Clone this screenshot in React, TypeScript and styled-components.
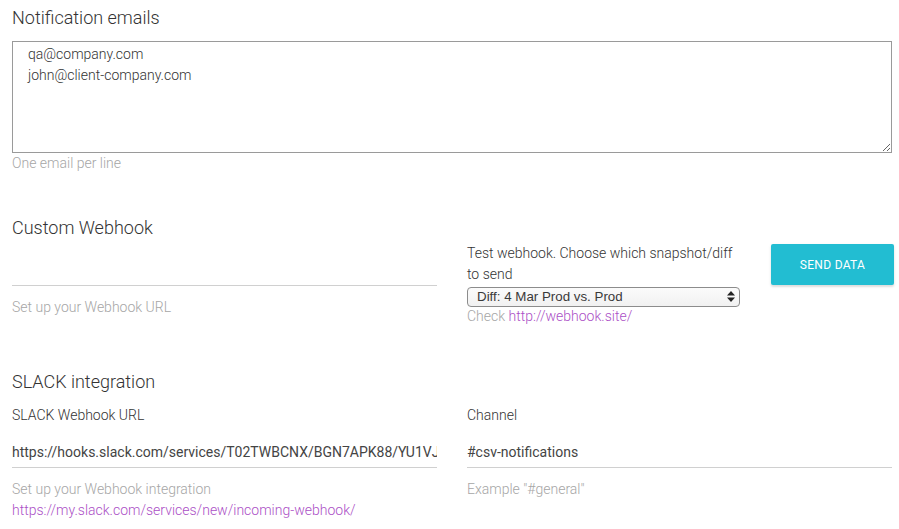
import React from "react";
import styled, { createGlobalStyle } from "styled-components";

const GlobalStyle = createGlobalStyle`
  html, body { margin: 0; padding: 0; background: #fff; }
  body {
    font-family: Roboto, "Noto Sans", Arial, sans-serif;
    color: #333;
    -webkit-font-smoothing: antialiased;
  }
  * { box-sizing: border-box; }
`;

const Page = styled.div`
  width: 899px;
  padding: 6px 7px 0 12px;
`;

const Heading = styled.h2<{ $top?: number }>`
  margin: ${(p) => p.$top ?? 0}px 0 0;
  font-size: 18px;
  font-weight: 300;
  line-height: 24px;
  color: #333;
`;

const TextArea = styled.textarea`
  display: block;
  width: 880px;
  height: 112px;
  margin-top: 11px;
  padding: 2px 15px;
  border: 1px solid #9a9a9a;
  border-radius: 0;
  font-family: Roboto, Arial, sans-serif;
  font-size: 14px;
  font-weight: 300;
  line-height: 21px;
  color: #333;
  resize: both;
  outline: none;
`;

const Helper = styled.div<{ $top?: number }>`
  margin-top: ${(p) => p.$top ?? 0}px;
  font-size: 14px;
  line-height: 21px;
  color: #a6a6a6;
  font-weight: 300;
`;

const Link = styled.a`
  color: #ab4fc6;
  text-decoration: none;
`;

const Columns = styled.div<{ $top: number }>`
  display: grid;
  grid-template-columns: 425px 425px;
  column-gap: 30px;
  margin-top: ${(p) => p.$top}px;
  align-items: start;
`;

const Field = styled.div`
  display: flex;
  flex-direction: column;
`;

const Label = styled.div`
  font-size: 14px;
  font-weight: 300;
  line-height: 20px;
  color: #333;
`;

const LineInput = styled.input`
  display: block;
  width: 100%;
  height: 43px;
  padding: 17px 0 5px;
  border: none;
  border-bottom: 1px solid #d0d0d0;
  font-family: Roboto, Arial, sans-serif;
  font-size: 14px;
  line-height: 20px;
  color: #444;
  background: transparent;
  outline: none;
`;

const TestRow = styled.div`
  display: flex;
  align-items: flex-start;
  gap: 31px;
`;

const TestBlock = styled.div`
  width: 273px;
  flex-shrink: 0;
`;

const TestText = styled.div`
  font-size: 14px;
  font-weight: 300;
  line-height: 21px;
  color: #333;
`;

const SelectWrap = styled.div`
  position: relative;
  margin-top: 1px;
  height: 20px;
`;

const Select = styled.select`
  appearance: none;
  -webkit-appearance: none;
  width: 273px;
  height: 20px;
  padding: 0 20px 0 9px;
  border: 1px solid #8c8c8c;
  border-radius: 4px;
  background: linear-gradient(#fbfbfb, #f1f1f1);
  font-family: "Liberation Sans", Arial, sans-serif;
  font-size: 13.33px;
  line-height: 18px;
  color: #3a3a3a;
  outline: none;
`;

const Arrows = styled.svg`
  position: absolute;
  right: 5px;
  top: 5px;
  pointer-events: none;
`;

const SendButton = styled.button`
  flex-shrink: 0;
  width: 123px;
  height: 41px;
  border: none;
  border-radius: 2px;
  background: #22bdd2;
  color: #fff;
  font-family: Roboto, Arial, sans-serif;
  font-size: 12px;
  letter-spacing: 0.3px;
  text-transform: uppercase;
  box-shadow: 0 2px 2px 0 rgba(0, 0, 0, 0.1), 0 1px 4px 0 rgba(0, 0, 0, 0.06);
  cursor: pointer;
  margin-top: 1px;
`;

export default function App() {
  return (
    <>
      <GlobalStyle />
      <Page>
        <Heading>Notification emails</Heading>
        <TextArea
          defaultValue={"qa@company.com\njohn@client-company.com"}
        />
        <Helper>One email per line</Helper>

        <Heading $top={42}>Custom Webhook</Heading>
        <Columns $top={3}>
          <Field>
            <LineInput defaultValue="" />
            <Helper $top={11}>Set up your Webhook URL</Helper>
          </Field>
          <TestRow>
            <TestBlock>
              <TestText>
                Test webhook. Choose which snapshot/diff to send
              </TestText>
              <SelectWrap>
                <Select defaultValue="diff">
                  <option value="diff">Diff: 4 Mar Prod vs. Prod</option>
                </Select>
                <Arrows width="8" height="11" viewBox="0 0 8 11">
                  <path d="M4 0 L8 4.5 L0 4.5 Z" fill="#222" />
                  <path d="M4 11 L8 6.5 L0 6.5 Z" fill="#222" />
                </Arrows>
              </SelectWrap>
              <Helper>
                Check <Link href="#">http://webhook.site/</Link>
              </Helper>
            </TestBlock>
            <SendButton>Send data</SendButton>
          </TestRow>
        </Columns>

        <Heading $top={43}>SLACK integration</Heading>
        <Columns $top={11}>
          <Field>
            <Label>SLACK Webhook URL</Label>
            <LineInput defaultValue="https://hooks.slack.com/services/T02TWBCNX/BGN7APK88/YU1VJ" />
            <Helper $top={11}>Set up your Webhook integration</Helper>
            <Helper>
              <Link href="#">https://my.slack.com/services/new/incoming-webhook/</Link>
            </Helper>
          </Field>
          <Field>
            <Label>Channel</Label>
            <LineInput defaultValue="#csv-notifications" />
            <Helper $top={11}>Example "#general"</Helper>
          </Field>
        </Columns>
      </Page>
    </>
  );
}
